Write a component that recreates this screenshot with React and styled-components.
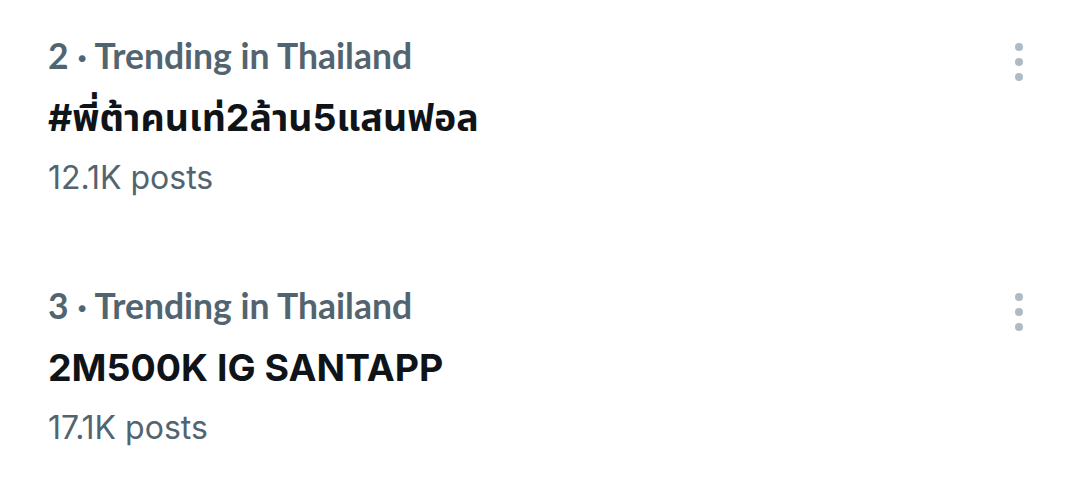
import React from "react"
import styled, { createGlobalStyle } from "styled-components"

const GlobalStyle = createGlobalStyle`
  body {
    margin: 0;
    background: #ffffff;
    font-family: Inter, "Noto Sans", sans-serif;
  }
`

const trends = [
  { rank: 2, place: "Thailand", name: "#พี่ต้าคนเท่2ล้าน5แสนฟอล", posts: "12.1K" },
  { rank: 3, place: "Thailand", name: "2M500K IG SANTAPP", posts: "17.1K" },
]

const App = () => (
  <>
    <GlobalStyle />
    <List>
      {trends.map(t => (
        <TrendItem key={t.rank}>
          <TrendBody>
            <Context>{t.rank} · Trending in {t.place}</Context>
            <TrendName>{t.name}</TrendName>
            <Posts>{t.posts} posts</Posts>
          </TrendBody>
          <MoreButton aria-label="More">
            <Dot />
            <Dot />
            <Dot />
          </MoreButton>
        </TrendItem>
      ))}
    </List>
  </>
)

export default App

const List = styled.div`
  display: flex;
  flex-direction: column;
  gap: 78px;
  padding: 34px 57px 0 48px;
`

const TrendItem = styled.div`
  display: flex;
  justify-content: space-between;
  align-items: flex-start;
`

const TrendBody = styled.div`
  display: flex;
  flex-direction: column;
`

const Context = styled.div`
  font-family: Lato, "Open Sans", sans-serif;
  font-weight: 700;
  font-size: 35.5px;
  line-height: 44px;
  color: #536471;
`

const TrendName = styled.div`
  margin-top: 10px;
  font-family: Inter, "Noto Sans", "Noto Sans Thai", sans-serif;
  font-weight: 700;
  font-size: 37.5px;
  line-height: 60px;
  color: #0f1419;
`

const Posts = styled.div`
  margin-top: 2px;
  font-family: Inter, "Noto Sans", sans-serif;
  font-weight: 400;
  font-size: 32px;
  line-height: 56px;
  color: #536471;
`

const MoreButton = styled.div`
  display: flex;
  flex-direction: column;
  align-items: center;
  gap: 7px;
  padding-top: 9px;
`

const Dot = styled.span`
  width: 8px;
  height: 8px;
  border-radius: 50%;
  background: #aebbc4;
`
